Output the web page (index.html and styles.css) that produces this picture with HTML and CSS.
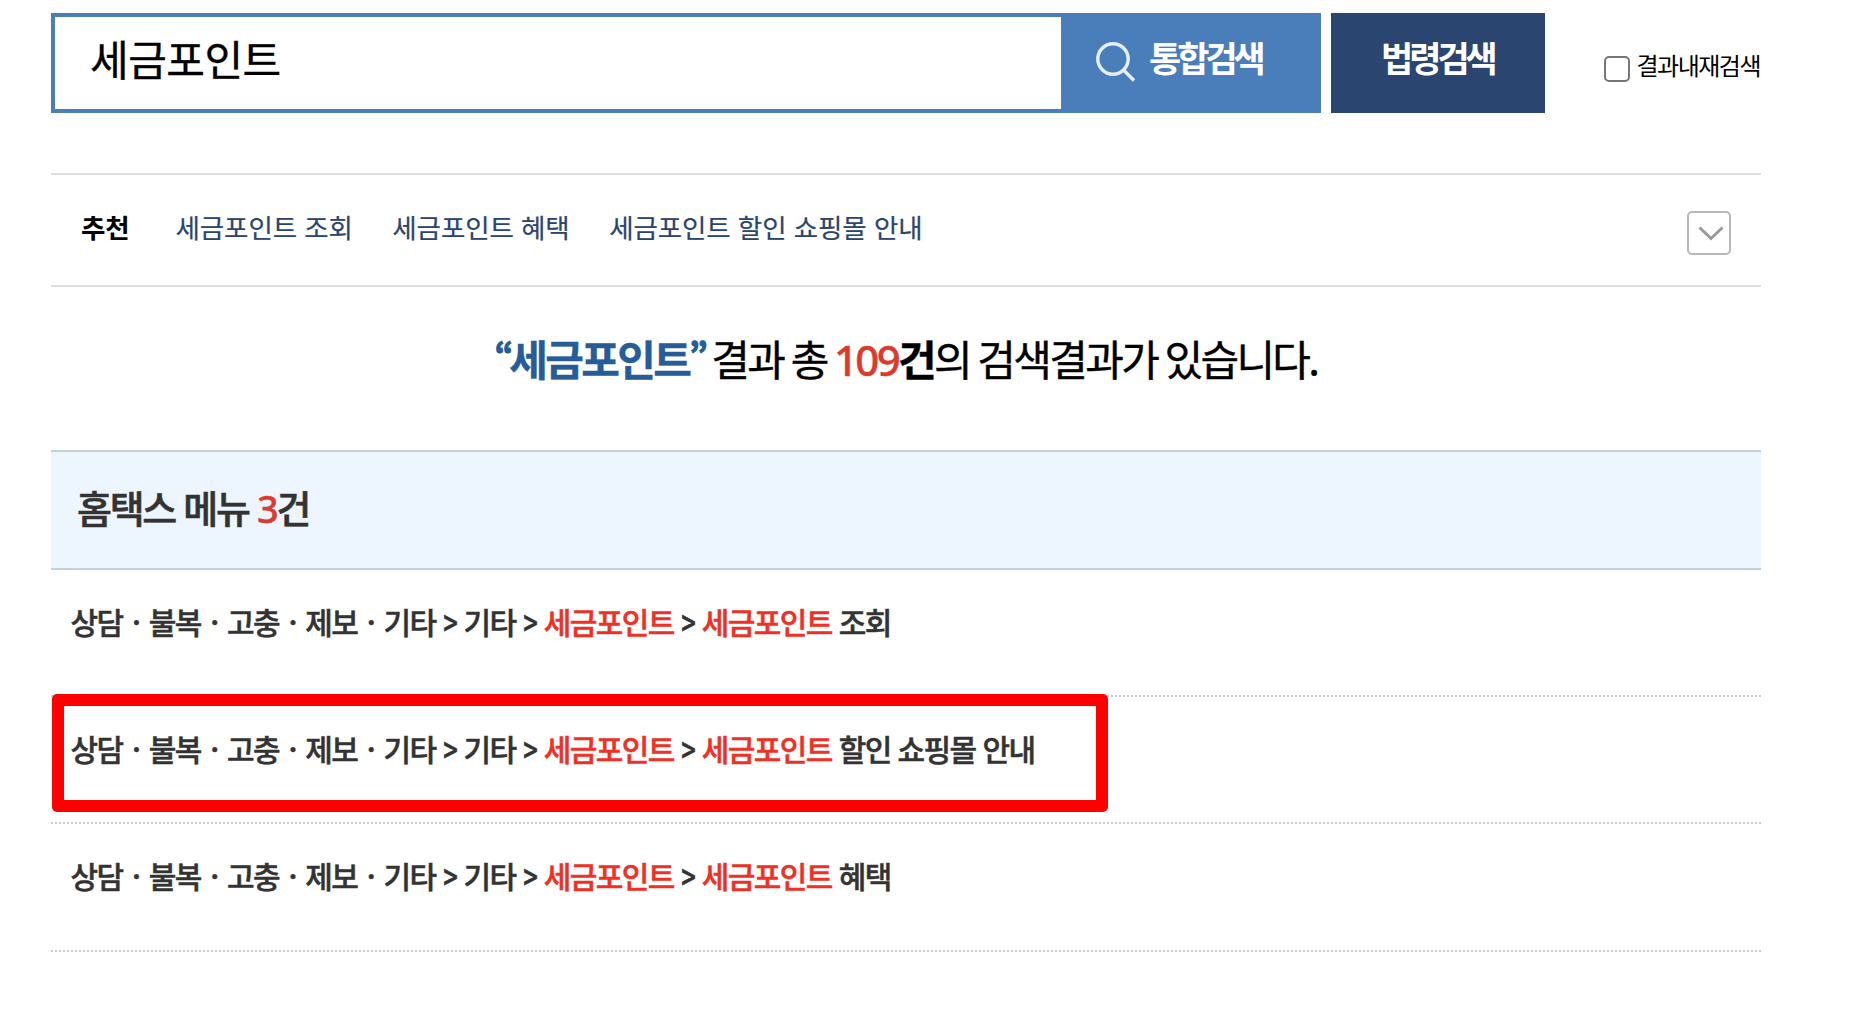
FILE: index.html
```html
<!DOCTYPE html>
<html lang="ko">
<head>
  <meta charset="UTF-8" />
  <meta name="viewport" content="width=device-width, initial-scale=1.0" />
  <title>홈택스 통합검색</title>
  <link rel="stylesheet" href="styles.css">
</head>
<body>
  <div class="container">
    <form class="search">
      <input class="search-input" type="text" value="세금포인트" />
      <button class="btn btn-search" type="button">
        <svg class="icon-search" viewBox="0 0 40 40"><circle cx="17" cy="17" r="15.2"/><path d="M27 27.5 38 38.5"/></svg>
        <span>통합검색</span>
      </button>
      <button class="btn btn-law" type="button"><span>법령검색</span></button>
      <label class="recheck"><input type="checkbox" class="checkbox" /><span>결과내재검색</span></label>
    </form>

    <div class="recommend">
      <strong class="recommend-title">추천</strong>
      <a class="recommend-link">세금포인트 조회</a>
      <a class="recommend-link">세금포인트 혜택</a>
      <a class="recommend-link">세금포인트 할인 쇼핑몰 안내</a>
      <button class="btn-more" type="button">
        <svg viewBox="0 0 26 16"><path d="M1.5 1.5 13 12.5 24.5 1.5"/></svg>
      </button>
    </div>

    <p class="result"><b class="keyword"><span class="quote">“</span>세금포인트<span class="quote">”</span></b> 결과 총 <span class="count">109</span><b>건</b>의 검색결과가 있습니다.</p>

    <h2 class="menu-title">홈택스 메뉴 <span class="count">3</span>건</h2>
    <ul class="menu-list">
      <li><a>상담 <i>·</i> 불복 <i>·</i> 고충 <i>·</i> 제보 <i>·</i> 기타 <b>&gt;</b> 기타 <b>&gt;</b> <em>세금포인트</em> <b>&gt;</b> <em>세금포인트</em> 조회</a></li>
      <li class="marked"><a>상담 <i>·</i> 불복 <i>·</i> 고충 <i>·</i> 제보 <i>·</i> 기타 <b>&gt;</b> 기타 <b>&gt;</b> <em>세금포인트</em> <b>&gt;</b> <em>세금포인트</em> 할인 쇼핑몰 안내</a></li>
      <li><a>상담 <i>·</i> 불복 <i>·</i> 고충 <i>·</i> 제보 <i>·</i> 기타 <b>&gt;</b> 기타 <b>&gt;</b> <em>세금포인트</em> <b>&gt;</b> <em>세금포인트</em> 혜택</a></li>
    </ul>
  </div>
</body>
</html>
```
FILE: styles.css
```css
* {
  box-sizing: border-box;
}
body {
  margin: 0;
  background: #fff;
  color: #000;
  font-family: "Noto Sans CJK KR", sans-serif;
}
button, input {
  font-family: inherit;
}
.container {
  width: 1710px;
  margin-left: 51px;
  padding-top: 13px;
}
.search {
  display: flex;
  height: 100px;
}
.search-input {
  width: 1010px;
  height: 100px;
  padding: 0 0 11px 35px;
  border: 4px solid #4a7ebb;
  border-right: 0;
  border-radius: 0;
  background: #fff;
  color: #000;
  font-size: 42px;
  letter-spacing: -0.5px;
  outline: none;
  -webkit-text-stroke: 0.4px;
}
.btn {
  display: flex;
  align-items: center;
  height: 100px;
  padding: 0 0 13px;
  border: 0;
  color: #fff;
  font-size: 35px;
  font-weight: 700;
  letter-spacing: -4px;
}
.btn-search {
  width: 260px;
  padding-left: 35px;
  background: #4a7ebb;
}
.icon-search {
  width: 40px;
  height: 40px;
  margin: 11px 13px 0 0;
  fill: none;
  stroke: #e6eef8;
  stroke-width: 3.4;
}
.btn-law {
  width: 214px;
  margin-left: 10px;
  padding-left: 50px;
  background: #2a4570;
}
.recheck {
  display: flex;
  align-items: flex-start;
  margin: 0 1px 0 auto;
  padding-top: 35px;
  font-size: 24px;
  line-height: 34px;
  letter-spacing: -1.5px;
  white-space: nowrap;
}
.checkbox {
  appearance: none;
  width: 26px;
  height: 26px;
  margin: 8px 7px 0 0;
  border: 2px solid #767676;
  border-radius: 5px;
  background: #fff;
}
.recommend {
  display: flex;
  align-items: center;
  height: 114px;
  margin-top: 60px;
  padding: 0 30px 8px;
  border-top: 2px solid #ddd;
  border-bottom: 2px solid #ddd;
  font-size: 26.5px;
  letter-spacing: -0.1px;
}
.recommend-title {
  margin-right: 46px;
}
.recommend-link {
  margin-right: 39.5px;
  color: #2a4570;
  -webkit-text-stroke: 0.2px;
}
.btn-more {
  display: flex;
  align-items: center;
  justify-content: center;
  width: 44px;
  height: 44px;
  margin: 14px 0 0 auto;
  padding: 2px 0 0 4px;
  border: 2px solid #b8b8b8;
  border-radius: 5px;
  background: #fff;
}
.btn-more svg {
  width: 26px;
  height: 16px;
  fill: none;
  stroke: #999;
  stroke-width: 3;
}
.result {
  margin: 0;
  padding-top: 40px;
  height: 163px;
  text-align: center;
  font-size: 42px;
  line-height: 62px;
  letter-spacing: -2.7px;
  word-spacing: -1.6px;
  -webkit-text-stroke: 0.4px;
}
.keyword {
  color: #265c97;
  letter-spacing: -2.6px;
}
.quote {
  font-size: 32px;
  line-height: 1;
  letter-spacing: -4px;
  vertical-align: 7px;
  -webkit-text-stroke: 1.2px;
}
.count {
  color: #dc3a2d;
  font-family: "Noto Sans", sans-serif;
  font-weight: 500;
  -webkit-text-stroke: 0.4px;
}
.menu-title {
  height: 120px;
  margin: 0;
  padding-left: 26px;
  border-top: 2px solid #c4d0da;
  border-bottom: 2px solid #c4d0da;
  background: #edf6fe;
  color: #333;
  font-size: 38px;
  font-weight: 500;
  line-height: 110px;
  letter-spacing: -2.3px;
  -webkit-text-stroke: 0.6px;
}
.menu-list {
  margin: 0;
  padding: 0;
  list-style: none;
}
.menu-list li {
  position: relative;
  height: 127px;
  padding: 29px 0 0 19.5px;
  border-bottom: 2px dotted #ccc;
  color: #333;
  font-size: 30px;
  font-weight: 500;
  line-height: 44px;
  letter-spacing: -1.58px;
  -webkit-text-stroke: 0.5px;
}
.menu-list li:last-child {
  height: 128px;
}
.menu-list em {
  color: #ee3124;
  font-style: normal;
}
/* path separators */
.menu-list i {
  margin: 0 2.6px;
  font-style: normal;
}
.menu-list b {
  display: inline-block;
  margin: 0 -0.6px;
  font-weight: 500;
  transform: scale(0.85, 1.15);
}
/* red frame around the highlighted row */
.marked::after {
  content: "";
  position: absolute;
  top: -3px;
  left: 1px;
  box-sizing: border-box;
  width: 1056px;
  height: 118px;
  border: 12px solid #f00;
  border-radius: 5px;
}
```
